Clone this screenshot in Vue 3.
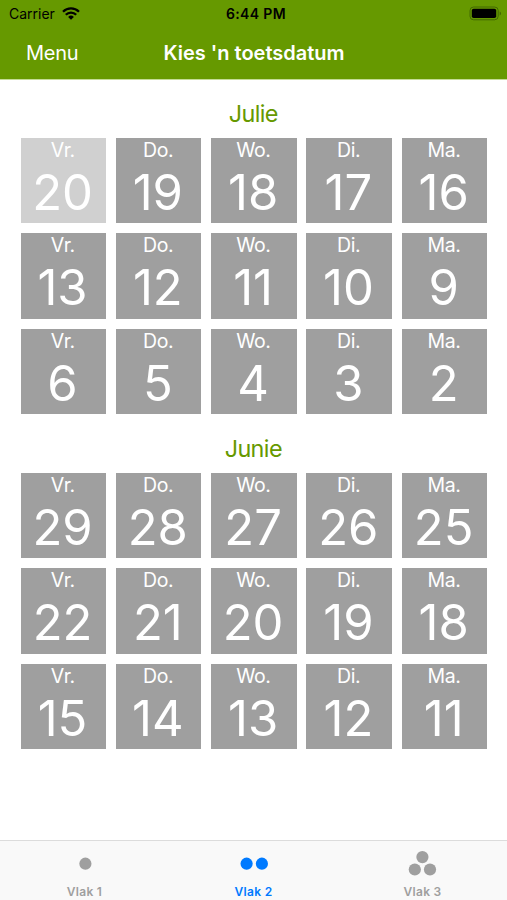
<template>
  <div class="screen">
    <header class="header">
      <div class="status-bar">
        <div class="carrier">
          <span>Carrier</span>
          <svg class="wifi" width="18" height="13" viewBox="0 0 18 13" fill="none" stroke="#000" stroke-width="2.3">
            <path d="M1 4.7a11.4 11.4 0 0 1 16 0" />
            <path d="M3.8 7.8a7.3 7.3 0 0 1 10.4 0" />
            <path d="M9 12.8L6.1 9.9a4.1 4.1 0 0 1 5.8 0z" fill="#000" stroke="none" />
          </svg>
        </div>
        <span class="time">6:44 PM</span>
        <svg class="battery" width="33" height="15" viewBox="0 0 33 15">
          <rect x="1" y="1" width="28.2" height="12.8" rx="3.6" fill="none" stroke="#436900" stroke-width="1" />
          <rect x="2.8" y="2.8" width="24.4" height="9.2" rx="1.8" fill="#000" />
          <path d="M30.7 5.4c1.8.8 1.8 3.2 0 4z" fill="#436900" />
        </svg>
      </div>
      <div class="nav-bar">
        <button class="menu-btn">Menu</button>
        <h1 class="title">Kies 'n toetsdatum</h1>
      </div>
    </header>

    <main class="content">
      <section v-for="month in months" :key="month.name" class="month">
        <h2 class="month-name">{{ month.name }}</h2>
        <div class="days">
          <button
            v-for="(date, i) in month.dates"
            :key="date"
            :class="['day', { today: month.today === date }]"
          >
            <span class="weekday">{{ weekdays[i % 5] }}</span>
            <span class="date">{{ date }}</span>
          </button>
        </div>
      </section>
    </main>

    <nav class="tab-bar">
      <button
        v-for="tab in tabs"
        :key="tab.id"
        :class="['tab', { active: activeTab === tab.id }]"
        @click="activeTab = tab.id"
      >
        <svg width="30" height="28" viewBox="0 0 30 28" fill="currentColor">
          <circle v-for="(dot, i) in tab.dots" :key="i" :cx="dot[0]" :cy="dot[1]" r="6.1" />
        </svg>
        <span class="tab-label">{{ tab.label }}</span>
      </button>
    </nav>
  </div>
</template>

<script setup>
import { ref } from 'vue'

const activeTab = ref(2)

const weekdays = ['Vr.', 'Do.', 'Wo.', 'Di.', 'Ma.']

const months = [
  { name: 'Julie', today: 20, dates: [20, 19, 18, 17, 16, 13, 12, 11, 10, 9, 6, 5, 4, 3, 2] },
  { name: 'Junie', today: null, dates: [29, 28, 27, 26, 25, 22, 21, 20, 19, 18, 15, 14, 13, 12, 11] },
]

const tabs = [
  { id: 1, label: 'Vlak 1', dots: [[15.4, 13.7]] },
  { id: 2, label: 'Vlak 2', dots: [[7.6, 13.7], [22.9, 13.7]] },
  { id: 3, label: 'Vlak 3', dots: [[14.4, 7.1], [6.8, 19.5], [22, 19.5]] },
]
</script>

<style>
body {
  margin: 0;
  background: #fff;
}
</style>

<style scoped>
.screen {
  display: flex;
  flex-direction: column;
  height: 900px;
  overflow: hidden;
  font-family: Inter, "Liberation Sans", sans-serif;
  background: #fff;
}

button {
  border: none;
  padding: 0;
  margin: 0;
  font-family: inherit;
  background: transparent;
  cursor: pointer;
}

.header {
  flex: none;
  height: 79px;
  border-bottom: 1px solid #c4dc96;
  background: #690;
}

.status-bar {
  display: grid;
  grid-template-columns: 1fr auto 1fr;
  align-items: center;
  height: 27px;
  padding: 0 5px 0 9px;
  font-size: 14px;
  color: #000;
}

.carrier {
  display: flex;
  align-items: center;
  gap: 7px;
}

.wifi {
  margin-bottom: 1px;
}

.time {
  padding-left: 1px;
  font-weight: 600;
  letter-spacing: 0.35px;
}

.battery {
  justify-self: end;
  margin-bottom: 1px;
}

.nav-bar {
  display: grid;
  grid-template-columns: 1fr auto 1fr;
  align-items: center;
  height: 51px;
  padding: 0 25px 0 26px;
  color: #fff;
}

.menu-btn {
  justify-self: start;
  font-size: 20px;
  letter-spacing: -0.3px;
  color: #fff;
}

.title {
  margin: 0;
  font-size: 20px;
  font-weight: 600;
}

.content {
  flex: 1;
  padding: 19px 19px 0 20.6px;
}

.month {
  margin-bottom: 20px;
}

.month-name {
  margin: 0 0 10px;
  padding-right: 2px;
  height: 29px;
  font-size: 23.4px;
  font-weight: 400;
  line-height: 29px;
  letter-spacing: -0.6px;
  text-align: center;
  color: #690;
}

.days {
  display: grid;
  grid-template-columns: repeat(5, 85.4px);
  grid-auto-rows: 85.4px;
  gap: 9.9px;
}

.day {
  display: flex;
  flex-direction: column;
  align-items: center;
  color: #fff;
  background: #9f9f9f;
}
.day.today {
  background: #d0d0d0;
}

.weekday {
  padding-right: 1px;
  font-size: 19.5px;
  line-height: 25px;
  letter-spacing: -0.4px;
}

.date {
  padding-right: 1.5px;
  font-size: 49px;
  line-height: 60.5px;
}

.tab-bar {
  display: grid;
  grid-template-columns: repeat(3, 1fr);
  flex: none;
  height: 60px;
  box-sizing: border-box;
  border-top: 1px solid #dcdcdc;
  background: #f9f9f9;
}

.tab {
  display: flex;
  flex-direction: column;
  align-items: center;
  padding-top: 9px;
  color: #9f9f9f;
}
.tab.active {
  color: #007aff;
}

.tab-label {
  margin-top: 6px;
  font-size: 12px;
  font-weight: 600;
  line-height: 16px;
  letter-spacing: 0.3px;
}
</style>
